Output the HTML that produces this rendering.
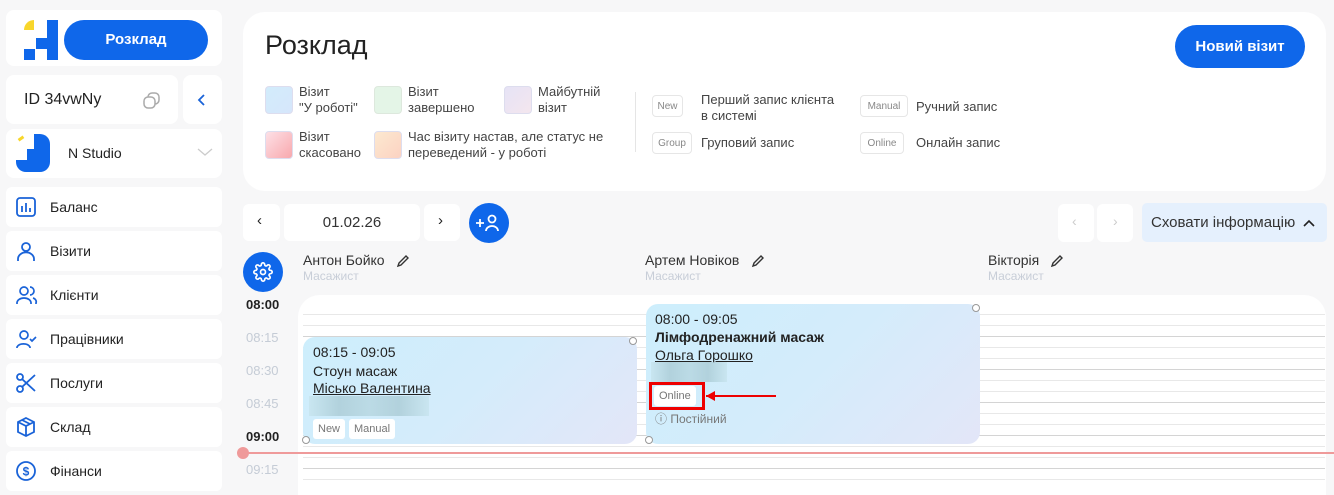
<!DOCTYPE html>
<html><head><meta charset="utf-8"><style>
*{box-sizing:border-box;margin:0;padding:0}
body{width:1334px;height:483px;overflow:hidden;background:#f7f7f8;font-family:"Liberation Sans",sans-serif;color:#222;position:relative}
.a{position:absolute}
.box{position:absolute;background:#fff;border-radius:8px}
.mi{position:absolute;left:6px;width:216px;height:40px;background:#fff;border-radius:6px;font-size:14px;color:#222}
.mi span{position:absolute;left:44px;top:12px}
.mi svg{position:absolute;left:10px;top:10px}
.sw{position:absolute;width:28px;height:28px;border-radius:4px;border:1px solid #dde}
.lt{position:absolute;font-size:13px;color:#444;line-height:16px}
.tag{position:absolute;background:#fff;border:1px solid #e6e6e6;border-radius:4px;font-size:10px;color:#888;display:flex;align-items:center;justify-content:center;height:22px}
.tm{position:absolute;left:246px;font-size:13px;color:#c5ccd6}
.ln{position:absolute;left:303px;width:1022px;height:1px;background:#e8e8e8}
.ln.d{background:#d4d4d4}
.ev{position:absolute;border-radius:12px;background:linear-gradient(135deg,#cdeefc 0%,#d4ecfb 50%,#e3e6f8 100%);font-size:14px;color:#222}
.hd{position:absolute;width:8px;height:8px;border:1px solid #999;border-radius:50%;background:#fff}
.et{position:absolute;background:#fff;border-radius:3px;font-size:11px;color:#777;line-height:20px;height:20px;padding:0 5px}
.blur{position:absolute;height:20px;background:linear-gradient(90deg,#c7e4ee,#aacbd5,#b6d6e0,#aacbd5,#c7e4ee);opacity:.8}
</style></head><body>
<!-- sidebar -->
<div class="box" style="left:6px;top:10px;width:216px;height:56px"></div>
<div class="a" style="left:24px;top:20px;width:10px;height:10px;background:#f8d62b;border-top-left-radius:10px"></div>
<div class="a" style="left:47px;top:20px;width:11px;height:40px;background:#0f67ea"></div>
<div class="a" style="left:36px;top:38px;width:11px;height:11px;background:#0f67ea"></div>
<div class="a" style="left:24px;top:49px;width:11px;height:11px;background:#0f67ea"></div>
<div class="a" style="left:64px;top:20px;width:144px;height:40px;background:#0f67ea;border-radius:20px;color:#fff;font-weight:bold;font-size:15px;text-align:center;line-height:40px">Розклад</div>
<div class="box" style="left:6px;top:75px;width:172px;height:49px"></div>
<div class="a" style="left:24px;top:91px;font-size:16px">ID 34vwNy</div>
<svg class="a" style="left:142px;top:90px" width="20" height="20" viewBox="0 0 20 20" fill="none" stroke="#aaa" stroke-width="1.5"><rect x="6" y="3" width="11" height="11" rx="4"/><rect x="2" y="7" width="11" height="11" rx="4" fill="#fff"/></svg>
<div class="box" style="left:183px;top:75px;width:39px;height:49px"></div>
<svg class="a" style="left:197px;top:93px" width="10" height="14" viewBox="0 0 10 14"><path d="M7 2L2 7l5 5" stroke="#1a63d8" stroke-width="1.8" fill="none"/></svg>
<div class="box" style="left:6px;top:129px;width:216px;height:49px"></div>
<div class="a" style="left:34px;top:134px;width:16px;height:38px;background:#0f67ea;border-radius:0 10px 10px 0"></div>
<div class="a" style="left:27px;top:149px;width:7px;height:11px;background:#0f67ea"></div>
<div class="a" style="left:16px;top:160px;width:11px;height:12px;background:#0f67ea;border-bottom-left-radius:10px"></div>
<div class="a" style="left:27px;top:160px;width:7px;height:12px;background:#0f67ea"></div>
<div class="a" style="left:18px;top:137px;width:6px;height:3px;background:#f8d62b;transform:rotate(-35deg)"></div>
<div class="a" style="left:68px;top:145px;font-size:14px">N Studio</div>
<svg class="a" style="left:197px;top:147px" width="16" height="10"><path d="M1 2l7 6 7-6" stroke="#ccc" stroke-width="1.3" fill="none"/></svg>

<div class="mi" style="top:187px"><svg width="20" height="20" viewBox="0 0 20 20" fill="none" stroke="#1a63d8" stroke-width="1.8"><rect x="1" y="1" width="18" height="18" rx="3"/><path d="M6 9v6M10 6v9M14 11v4"/></svg><span>Баланс</span></div>
<div class="mi" style="top:231px"><svg width="20" height="20" viewBox="0 0 20 20" fill="none" stroke="#1a63d8" stroke-width="1.8"><circle cx="10" cy="6" r="4"/><path d="M2 20v-2a6 5 0 0 1 16 0v2"/></svg><span>Візити</span></div>
<div class="mi" style="top:275px"><svg width="22" height="20" viewBox="0 0 22 20" fill="none" stroke="#1a63d8" stroke-width="1.7"><circle cx="8" cy="6" r="4"/><path d="M1 19v-1a7 5 0 0 1 14 0v1M14 2a4 4 0 0 1 0 8M17 13a5 4 0 0 1 3 5v1"/></svg><span>Клієнти</span></div>
<div class="mi" style="top:319px"><svg width="22" height="20" viewBox="0 0 22 20" fill="none" stroke="#1a63d8" stroke-width="1.7"><circle cx="8" cy="6" r="4"/><path d="M1 19v-1a7 5 0 0 1 13 0v1M14 10l2 2 4-4"/></svg><span>Працівники</span></div>
<div class="mi" style="top:363px"><svg width="20" height="20" viewBox="0 0 20 20" fill="none" stroke="#1a63d8" stroke-width="1.8"><circle cx="4" cy="4" r="3"/><circle cx="4" cy="16" r="3"/><path d="M6 6l13 12M6 14L19 2"/></svg><span>Послуги</span></div>
<div class="mi" style="top:407px"><svg width="20" height="20" viewBox="0 0 20 20" fill="none" stroke="#1a63d8" stroke-width="1.8"><path d="M10 1l8 4v10l-8 4-8-4V5zM2 5l8 4 8-4M10 9v10M6 3l8 4"/></svg><span>Склад</span></div>
<div class="mi" style="top:451px"><svg width="20" height="20" viewBox="0 0 20 20" fill="none" stroke="#1a63d8" stroke-width="1.8"><circle cx="10" cy="10" r="9"/><text x="10" y="14.5" font-size="12" text-anchor="middle" fill="#1a63d8" stroke="none" font-weight="bold" font-family="Liberation Sans">$</text></svg><span>Фінанси</span></div>

<!-- header card -->
<div class="box" style="left:243px;top:12px;width:1083px;height:179px;border-radius:22px"></div>
<div class="a" style="left:265px;top:30px;font-size:27px;color:#222">Розклад</div>
<div class="a" style="left:1175px;top:25px;width:130px;height:43px;background:#0f67ea;border-radius:22px;color:#fff;font-weight:bold;font-size:15px;text-align:center;line-height:43px">Новий візит</div>
<div class="sw" style="left:265px;top:86px;background:linear-gradient(135deg,#d2ecfb,#d6e6fb)"></div><div class="lt" style="left:299px;top:84px">Візит<br>"У роботі"</div>
<div class="sw" style="left:374px;top:86px;background:#e4f5e7;border-color:#dde8dd"></div><div class="lt" style="left:408px;top:84px">Візит<br>завершено</div>
<div class="sw" style="left:504px;top:86px;background:linear-gradient(135deg,#e6e3f6,#f4e6ee)"></div><div class="lt" style="left:538px;top:84px">Майбутній<br>візит</div>
<div class="sw" style="left:265px;top:131px;background:linear-gradient(135deg,#fde0e6,#f8a8ad)"></div><div class="lt" style="left:299px;top:129px">Візит<br>скасовано</div>
<div class="sw" style="left:374px;top:131px;background:linear-gradient(135deg,#fde9d0,#fbd2c2)"></div><div class="lt" style="left:408px;top:129px">Час візиту настав, але статус не<br>переведений - у роботі</div>
<div class="a" style="left:635px;top:92px;width:1px;height:60px;background:#e5e5e5"></div>
<div class="tag" style="left:652px;top:95px;width:31px">New</div><div class="lt" style="left:701px;top:92px">Перший запис клієнта<br>в системі</div>
<div class="tag" style="left:860px;top:95px;width:48px">Manual</div><div class="lt" style="left:916px;top:99px">Ручний запис</div>
<div class="tag" style="left:652px;top:132px;width:40px">Group</div><div class="lt" style="left:701px;top:135px">Груповий запис</div>
<div class="tag" style="left:860px;top:132px;width:44px">Online</div><div class="lt" style="left:916px;top:135px">Онлайн запис</div>

<!-- toolbar -->
<div class="box" style="left:243px;top:204px;width:37px;height:37px;border-radius:6px"></div><div class="a" style="left:257px;top:212px;font-size:15px">‹</div>
<div class="box" style="left:284px;top:204px;width:136px;height:37px;border-radius:6px;text-align:center;line-height:37px;font-size:15px;color:#333">01.02.26</div>
<div class="box" style="left:424px;top:204px;width:36px;height:37px;border-radius:6px"></div><div class="a" style="left:438px;top:212px;font-size:15px">›</div>
<div class="a" style="left:469px;top:203px;width:40px;height:40px;border-radius:50%;background:#0f67ea"></div>
<svg class="a" style="left:475px;top:213px" width="28" height="20" viewBox="0 0 28 20" fill="none" stroke="#fff" stroke-width="1.8"><path d="M1 10h8M5 6v8"/><circle cx="17" cy="6" r="3.5"/><path d="M11 18a6 5 0 0 1 12 0"/></svg>
<div class="box" style="left:1058px;top:204px;width:36px;height:38px;border-radius:6px"></div><div class="a" style="left:1072px;top:213px;color:#ccc;font-size:14px">‹</div>
<div class="box" style="left:1097px;top:204px;width:36px;height:38px;border-radius:6px"></div><div class="a" style="left:1113px;top:213px;color:#ccc;font-size:14px">›</div>
<div class="a" style="left:1142px;top:203px;width:185px;height:39px;background:#e5f0fd;border-radius:5px;font-size:15px;color:#333;line-height:39px;padding-left:9px">Сховати інформацію</div>
<svg class="a" style="left:1303px;top:219px" width="12" height="8"><path d="M1 7l5-5 5 5" stroke="#222" stroke-width="1.6" fill="none"/></svg>

<!-- columns -->
<div class="a" style="left:243px;top:252px;width:40px;height:40px;border-radius:50%;background:#0f67ea"></div>
<svg class="a" style="left:253px;top:262px" width="20" height="20" viewBox="0 0 24 24" fill="none" stroke="#fff" stroke-width="2"><circle cx="12" cy="12" r="3"/><path d="M19.4 15a1.7 1.7 0 0 0 .3 1.8l.1.1a2 2 0 1 1-2.8 2.8l-.1-.1a1.7 1.7 0 0 0-1.8-.3 1.7 1.7 0 0 0-1 1.5V21a2 2 0 1 1-4 0v-.1a1.7 1.7 0 0 0-1.1-1.5 1.7 1.7 0 0 0-1.8.3l-.1.1a2 2 0 1 1-2.8-2.8l.1-.1a1.7 1.7 0 0 0 .3-1.8 1.7 1.7 0 0 0-1.5-1H3a2 2 0 1 1 0-4h.1a1.7 1.7 0 0 0 1.5-1.1 1.7 1.7 0 0 0-.3-1.8l-.1-.1a2 2 0 1 1 2.8-2.8l.1.1a1.7 1.7 0 0 0 1.8.3H9a1.7 1.7 0 0 0 1-1.5V3a2 2 0 1 1 4 0v.1a1.7 1.7 0 0 0 1 1.5 1.7 1.7 0 0 0 1.8-.3l.1-.1a2 2 0 1 1 2.8 2.8l-.1.1a1.7 1.7 0 0 0-.3 1.8V9a1.7 1.7 0 0 0 1.5 1H21a2 2 0 1 1 0 4h-.1a1.7 1.7 0 0 0-1.5 1z"/></svg>
<div class="a" style="left:303px;top:252px;font-size:14px;color:#333">Антон Бойко</div><div class="a" style="left:303px;top:269px;font-size:12px;color:#c8ced8">Масажист</div>
<div class="a" style="left:645px;top:252px;font-size:14px;color:#333">Артем Новіков</div><div class="a" style="left:645px;top:269px;font-size:12px;color:#c8ced8">Масажист</div>
<div class="a" style="left:988px;top:252px;font-size:14px;color:#333">Вікторія</div><div class="a" style="left:988px;top:269px;font-size:12px;color:#c8ced8">Масажист</div>
<svg class="a" style="left:396px;top:254px" width="14" height="14"><path d="M2 12l1-3 7-7 2 2-7 7z" stroke="#333" stroke-width="1.4" fill="none"/></svg>
<svg class="a" style="left:751px;top:254px" width="14" height="14"><path d="M2 12l1-3 7-7 2 2-7 7z" stroke="#333" stroke-width="1.4" fill="none"/></svg>
<svg class="a" style="left:1050px;top:254px" width="14" height="14"><path d="M2 12l1-3 7-7 2 2-7 7z" stroke="#333" stroke-width="1.4" fill="none"/></svg>

<!-- grid -->
<div class="a" style="left:298px;top:295px;width:1028px;height:200px;background:#fff;border-radius:22px 22px 0 0"></div>
<div class="tm" style="top:297px;color:#222;font-weight:bold">08:00</div>
<div class="tm" style="top:330px">08:15</div>
<div class="tm" style="top:363px">08:30</div>
<div class="tm" style="top:396px">08:45</div>
<div class="tm" style="top:429px;color:#222;font-weight:bold">09:00</div>
<div class="tm" style="top:462px">09:15</div>
<div class="ln" style="top:314px"></div><div class="ln" style="top:325px"></div><div class="ln d" style="top:336px"></div>
<div class="ln" style="top:347px"></div><div class="ln" style="top:358px"></div><div class="ln d" style="top:369px"></div>
<div class="ln" style="top:380px"></div><div class="ln" style="top:391px"></div><div class="ln d" style="top:402px"></div>
<div class="ln" style="top:413px"></div><div class="ln" style="top:424px"></div><div class="ln d" style="top:435px"></div>
<div class="ln" style="top:446px"></div><div class="ln" style="top:457px"></div><div class="ln d" style="top:468px"></div><div class="ln" style="top:479px"></div>

<div class="ev" style="left:303px;top:337px;width:334px;height:107px">
<div class="a" style="left:10px;top:7px">08:15 - 09:05</div>
<div class="a" style="left:10px;top:26px">Стоун масаж</div>
<div class="a" style="left:10px;top:43px;text-decoration:underline">Місько Валентина</div>
<div class="blur" style="left:6px;top:59px;width:120px"></div>
<div class="et" style="left:10px;top:82px">New</div><div class="et" style="left:46px;top:82px">Manual</div>
</div>
<div class="hd" style="left:629px;top:337px"></div><div class="hd" style="left:302px;top:436px"></div>
<div class="ev" style="left:646px;top:304px;width:334px;height:140px">
<div class="a" style="left:9px;top:7px">08:00 - 09:05</div>
<div class="a" style="left:9px;top:25px;font-weight:bold">Лімфодренажний масаж</div>
<div class="a" style="left:9px;top:43px;text-decoration:underline">Ольга Горошко</div>
<div class="blur" style="left:5px;top:58px;width:76px"></div>
<div class="a" style="left:3px;top:78px;width:56px;height:28px;border:3px solid #e00;"></div>
<div class="et" style="left:8px;top:82px">Online</div>
<div class="a" style="left:60px;top:91px;width:70px;height:2px;background:#e00"></div>
<div class="a" style="left:60px;top:87px;width:0;height:0;border-top:5px solid transparent;border-bottom:5px solid transparent;border-right:9px solid #e00"></div>
<div class="a" style="left:9px;top:106px;font-size:12px;color:#777">ⓘ Постійний</div>
</div>
<div class="hd" style="left:972px;top:304px"></div><div class="hd" style="left:645px;top:436px"></div>
<div class="a" style="left:243px;top:452px;width:1091px;height:2px;background:#ef9a9a"></div>
<div class="a" style="left:237px;top:447px;width:12px;height:12px;border-radius:50%;background:#ef9a9a"></div>
</body></html>
